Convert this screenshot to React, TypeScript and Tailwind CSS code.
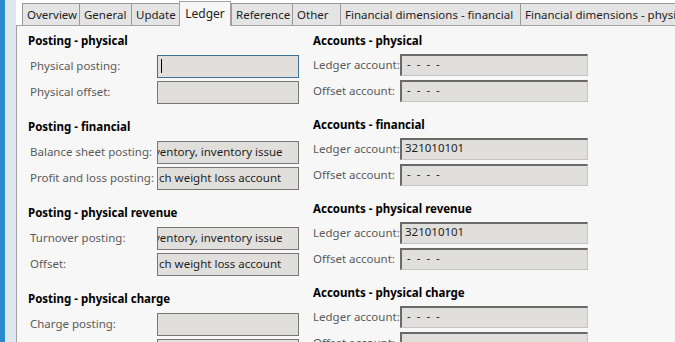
import React from "react";

const tabs = [
  { label: "Overview", w: "w-[57px]" },
  { label: "General", w: "w-[52px]" },
  { label: "Update", w: "w-[48px]" },
  { label: "Ledger", w: "w-[52px]", active: true },
  { label: "Reference", w: "w-[61px]" },
  { label: "Other", w: "w-[48px]" },
  { label: "Financial dimensions - financial", w: "w-[180px]" },
  { label: "Financial dimensions - physical", w: "w-[180px]" },
];

type Field = { label: string; value?: string; shift?: boolean; focus?: boolean };

const posting: { title: string; fields: Field[] }[] = [
  {
    title: "Posting - physical",
    fields: [{ label: "Physical posting:", focus: true }, { label: "Physical offset:" }],
  },
  {
    title: "Posting - financial",
    fields: [
      { label: "Balance sheet posting:", value: "ventory, inventory issue", shift: true },
      { label: "Profit and loss posting:", value: "ch weight loss account" },
    ],
  },
  {
    title: "Posting - physical revenue",
    fields: [
      { label: "Turnover posting:", value: "ventory, inventory issue", shift: true },
      { label: "Offset:", value: "ch weight loss account" },
    ],
  },
  {
    title: "Posting - physical charge",
    fields: [{ label: "Charge posting:" }, { label: "Offset:" }],
  },
];

const accounts: { title: string; ledger: string; offset: string }[] = [
  { title: "Accounts - physical", ledger: "- - - -", offset: "- - - -" },
  { title: "Accounts - financial", ledger: "321010101", offset: "- - - -" },
  { title: "Accounts - physical revenue", ledger: "321010101", offset: "- - - -" },
  { title: "Accounts - physical charge", ledger: "- - - -", offset: "- - - -" },
];

function PostingInput({ field }: { field: Field }) {
  return (
    <div
      className={`w-[142px] shrink-0 h-[23px] bg-[#e1dfdc] border flex items-center overflow-hidden whitespace-nowrap text-[11.5px] text-[#1e1e1e] ${
        field.focus ? "border-[#3f6f93]" : "border-[#777777]"
      }`}
    >
      {field.focus && <span className="ml-[3px] w-px h-[14px] bg-black" />}
      {field.value && (
        <span className={field.shift ? "ml-[-4px]" : "ml-[1px]"}>{field.value}</span>
      )}
    </div>
  );
}

function AccountInput({ value }: { value: string }) {
  const empty = value.startsWith("-");
  return (
    <div
      className={`w-[188px] shrink-0 h-[22px] bg-[#e1dfdc] border-t-2 border-l-2 border-b border-r border-t-[#6a6a6a] border-l-[#6a6a6a] border-b-[#c4c4c4] border-r-[#c4c4c4] leading-[16px] text-[11.5px] text-[#1e1e1e] whitespace-nowrap ${
        empty ? "pl-[5px] tracking-[1.5px]" : "pl-[3px]"
      }`}
    >
      {value}
    </div>
  );
}

export default function App() {
  return (
    <div
      className="w-[675px] h-[342px] flex overflow-hidden bg-white text-[11.5px]"
      style={{ fontFamily: '"Segoe UI", "Noto Sans", sans-serif' }}
    >
      <div className="w-[5px] shrink-0 bg-[#2b8bcf]" />
      <div className="w-[11px] shrink-0 bg-[#dde7f0]" />
      <div className="flex-1 min-w-0 flex flex-col">
        {/* tab strip */}
        <div className="h-[25px] shrink-0 flex items-end pl-[6px] bg-white">
          {tabs.map((t) =>
            t.active ? (
              <div
                key={t.label}
                className={`${t.w} shrink-0 h-[25px] -mb-px relative z-10 bg-[#f7f7f7] border-t border-l border-r border-[#a3a3a3] flex items-center justify-center text-[12px] text-[#1e1e1e] pb-[1px]`}
              >
                {t.label}
              </div>
            ) : (
              <div
                key={t.label}
                className={`${t.w} shrink-0 h-[22px] bg-[#e4e4e4] border-t border-l border-[#9a9a9a] flex items-center pl-[4px] text-[11.5px] text-[#1e1e1e] whitespace-nowrap overflow-hidden`}
              >
                {t.label}
              </div>
            )
          )}
        </div>

        {/* panel */}
        <div className="flex-1 bg-[#f7f7f7] border-t border-l border-[#a3a3a3] flex pl-[11px] pt-[6px]">
          <div className="w-[271px] shrink-0 flex flex-col gap-[13px]">
            {posting.map((s) => (
              <div key={s.title} className="flex flex-col">
                <div className="h-[18px] leading-[18px] font-bold text-black">{s.title}</div>
                <div className="mt-[3px] flex flex-col">
                  {s.fields.map((f, i) => (
                    <div key={i} className="h-[26px] flex items-center">
                      <div className="w-[129px] shrink-0 pl-[2px] text-[#5a5a5a] whitespace-nowrap">{f.label}</div>
                      <PostingInput field={f} />
                    </div>
                  ))}
                </div>
              </div>
            ))}
          </div>
          <div className="ml-[14px] w-[275px] shrink-0 flex flex-col gap-[12px]">
            {accounts.map((a) => (
              <div key={a.title} className="flex flex-col">
                <div className="h-[18px] leading-[18px] font-bold text-black">{a.title}</div>
                <div className="mt-[2px] flex flex-col">
                  <div className="h-[26px] flex items-center">
                    <div className="w-[87px] shrink-0 text-[#5a5a5a] whitespace-nowrap">Ledger account:</div>
                    <AccountInput value={a.ledger} />
                  </div>
                  <div className="h-[26px] flex items-center">
                    <div className="w-[87px] shrink-0 text-[#5a5a5a] whitespace-nowrap">Offset account:</div>
                    <AccountInput value={a.offset} />
                  </div>
                </div>
              </div>
            ))}
          </div>
        </div>
      </div>
    </div>
  );
}
